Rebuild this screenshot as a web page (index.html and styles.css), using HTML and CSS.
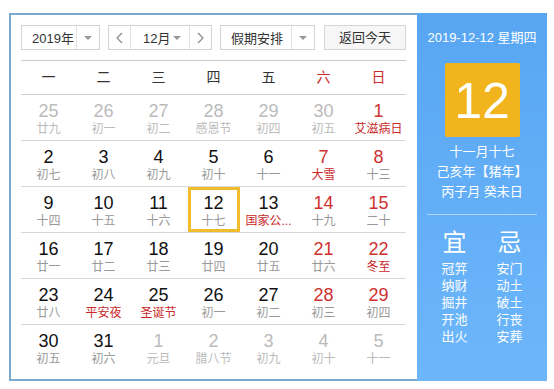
FILE: index.html
```html
<!doctype html>
<html lang="zh-CN">
	<head>
		<meta charset="utf-8">
		<link rel="stylesheet" href="styles.css">
		<title>万年历</title>
	</head>
	<body>
	<div class="calendar">
		<div class="main">
			<div class="bar">
				<div class="sel year">
					<span class="val">2019年</span>
					<span class="arr"><i class="tri"></i></span>
				</div>
				<div class="sel month">
					<span class="nav"><svg width="7" height="12" viewBox="0 0 7 12"><polyline points="6,1 1,6 6,11" fill="none" stroke="#888" stroke-width="1.2"/></svg></span>
					<span class="val">12月<i class="tri"></i></span>
					<span class="nav next"><svg width="7" height="12" viewBox="0 0 7 12"><polyline points="1,1 6,6 1,11" fill="none" stroke="#888" stroke-width="1.2"/></svg></span>
				</div>
				<div class="sel holiday">
					<span class="val">假期安排</span>
					<span class="arr"><i class="tri"></i></span>
				</div>
				<div class="btn">返回今天</div>
			</div>

			<div class="week">
				<span>一</span><span>二</span><span>三</span><span>四</span><span>五</span>
				<span class="red">六</span><span class="red">日</span>
			</div>

			<div class="days">
				<div class="row">
					<div class="day other"><b>25</b><em>廿九</em></div>
					<div class="day other"><b>26</b><em>初一</em></div>
					<div class="day other"><b>27</b><em>初二</em></div>
					<div class="day other"><b>28</b><em>感恩节</em></div>
					<div class="day other"><b>29</b><em>初四</em></div>
					<div class="day other"><b>30</b><em>初五</em></div>
					<div class="day wk"><b>1</b><em class="fest">艾滋病日</em></div>
				</div>
				<div class="row">
					<div class="day"><b>2</b><em>初七</em></div>
					<div class="day"><b>3</b><em>初八</em></div>
					<div class="day"><b>4</b><em>初九</em></div>
					<div class="day"><b>5</b><em>初十</em></div>
					<div class="day"><b>6</b><em>十一</em></div>
					<div class="day wk"><b>7</b><em class="fest">大雪</em></div>
					<div class="day wk"><b>8</b><em>十三</em></div>
				</div>
				<div class="row">
					<div class="day"><b>9</b><em>十四</em></div>
					<div class="day"><b>10</b><em>十五</em></div>
					<div class="day"><b>11</b><em>十六</em></div>
					<div class="day today"><b>12</b><em>十七</em></div>
					<div class="day"><b>13</b><em class="fest">国家公...</em></div>
					<div class="day wk"><b>14</b><em>十九</em></div>
					<div class="day wk"><b>15</b><em>二十</em></div>
				</div>
				<div class="row">
					<div class="day"><b>16</b><em>廿一</em></div>
					<div class="day"><b>17</b><em>廿二</em></div>
					<div class="day"><b>18</b><em>廿三</em></div>
					<div class="day"><b>19</b><em>廿四</em></div>
					<div class="day"><b>20</b><em>廿五</em></div>
					<div class="day wk"><b>21</b><em>廿六</em></div>
					<div class="day wk"><b>22</b><em class="fest">冬至</em></div>
				</div>
				<div class="row">
					<div class="day"><b>23</b><em>廿八</em></div>
					<div class="day"><b>24</b><em class="fest">平安夜</em></div>
					<div class="day"><b>25</b><em class="fest">圣诞节</em></div>
					<div class="day"><b>26</b><em>初一</em></div>
					<div class="day"><b>27</b><em>初二</em></div>
					<div class="day wk"><b>28</b><em>初三</em></div>
					<div class="day wk"><b>29</b><em>初四</em></div>
				</div>
				<div class="row">
					<div class="day"><b>30</b><em>初五</em></div>
					<div class="day"><b>31</b><em>初六</em></div>
					<div class="day other"><b>1</b><em>元旦</em></div>
					<div class="day other"><b>2</b><em>腊八节</em></div>
					<div class="day other"><b>3</b><em>初九</em></div>
					<div class="day other"><b>4</b><em>初十</em></div>
					<div class="day other"><b>5</b><em>十一</em></div>
				</div>
			</div>
		</div>

		<div class="side">
			<div class="date">2019-12-12 星期四</div>
			<div class="big">12</div>
			<div class="lunar">
				<p>十一月十七</p>
				<p>己亥年【猪年】</p>
				<p>丙子月 癸未日</p>
			</div>
			<div class="yiji">
				<div class="col">
					<h3>宜</h3>
					<p>冠笄</p><p>纳财</p><p>掘井</p><p>开池</p><p>出火</p>
				</div>
				<div class="col">
					<h3>忌</h3>
					<p>安门</p><p>动土</p><p>破土</p><p>行丧</p><p>安葬</p>
				</div>
			</div>
		</div>
	</div>
	</body>
</html>
```

FILE: styles.css
```css
body {
	background: #fff;
	color: #333;
	font: 13px "Liberation Sans", "Noto Sans CJK SC", sans-serif;
	margin: 0;
}

.calendar {
	border: 2px solid #78aacb;
	display: flex;
	height: 364px;
	margin: 13px 0 0 9px;
	width: 534px;
}

.main {
	flex: 1;
	padding: 10px 11px 0 10px;
}

/* top controls */
.bar {
	display: flex;
	gap: 8px;
	height: 25px;
}

.sel {
	background: #fff;
	border: 1px solid #d3d3d3;
	box-sizing: border-box;
	display: flex;
	height: 25px;
}

.sel .val {
	align-items: center;
	box-sizing: border-box;
	display: flex;
	padding-left: 10px;
}

.sel .arr {
	align-items: center;
	border-left: 1px solid #e2e2e2;
	display: flex;
	justify-content: center;
	width: 23px;
}

.tri {
	border-left: 4px solid transparent;
	border-right: 4px solid transparent;
	border-top: 4px solid #999;
	display: inline-block;
	height: 0;
	width: 0;
}

.year {
	width: 79px;
}

.year .val {
	width: 55px;
}

.month {
	width: 104px;
}

.month .nav {
	align-items: center;
	border-right: 1px solid #e2e2e2;
	display: flex;
	justify-content: center;
	width: 21px;
}

.month .next {
	border-left: 1px solid #e2e2e2;
	border-right: 0;
}

.month .val {
	flex: 1;
	padding: 0 8px 0 12px;
}

.month .val .tri {
	margin-left: auto;
}

.holiday {
	width: 95px;
}

.holiday .val {
	width: 71px;
}

.btn {
	background: #f6f6f6;
	border: 1px solid #d6d6d6;
	box-sizing: border-box;
	line-height: 23px;
	margin-left: 1px;
	text-align: center;
	width: 82px;
}

/* grid */
.week {
	border-bottom: 1px solid #d0d0d0;
	border-top: 1px solid #c4ccd3;
	display: grid;
	font-size: 14px;
	grid-template-columns: repeat(7, 55px);
	line-height: 33px;
	margin-top: 10px;
	text-align: center;
}

.red {
	color: #cc2a2a;
}

.row {
	border-bottom: 1px solid #d8d8d8;
	display: grid;
	grid-template-columns: repeat(7, 55px);
	height: 45px;
}

.row:last-child {
	border-bottom: 0;
}

.day {
	box-sizing: border-box;
	height: 45px;
	justify-self: center;
	padding-top: 5px;
	text-align: center;
	width: 52px;
}

.day b {
	color: #111;
	display: block;
	font-size: 18px;
	font-weight: normal;
	line-height: 22px;
}

.day em {
	color: #999;
	display: block;
	font-size: 12px;
	font-style: normal;
	line-height: 14px;
	white-space: nowrap;
}

.day.wk b {
	color: #d03030;
}

.day em.fest {
	color: #c82828;
}

.day.other b,
.day.other em {
	color: #bbb;
}

.day.today {
	border: 3px solid #efbd2c;
	padding-top: 2px;
}

/* right panel */
.side {
	background: linear-gradient(#58a6f2, #6db6fb);
	color: #fff;
	margin: -2px -2px -2px 0;
	text-align: center;
	width: 130px;
}

.date {
	line-height: 18px;
	padding-top: 16px;
}

.big {
	background: #f1b41c;
	border-radius: 2px;
	font-size: 50px;
	height: 74px;
	line-height: 76px;
	margin: 16px auto 0;
	width: 75px;
}

.lunar {
	border-bottom: 1px solid rgba(255, 255, 255, .5);
	margin: 5px 10px 0;
	padding-bottom: 12px;
}

.lunar p {
	line-height: 20px;
	margin: 0;
}

.yiji {
	display: flex;
	gap: 15px;
	justify-content: center;
	margin-top: 13px;
}

.col {
	width: 40px;
}

.col h3 {
	font-size: 24px;
	font-weight: normal;
	line-height: 30px;
	margin: 0 0 2px;
}

.col p {
	line-height: 17px;
	margin: 0;
}
```
